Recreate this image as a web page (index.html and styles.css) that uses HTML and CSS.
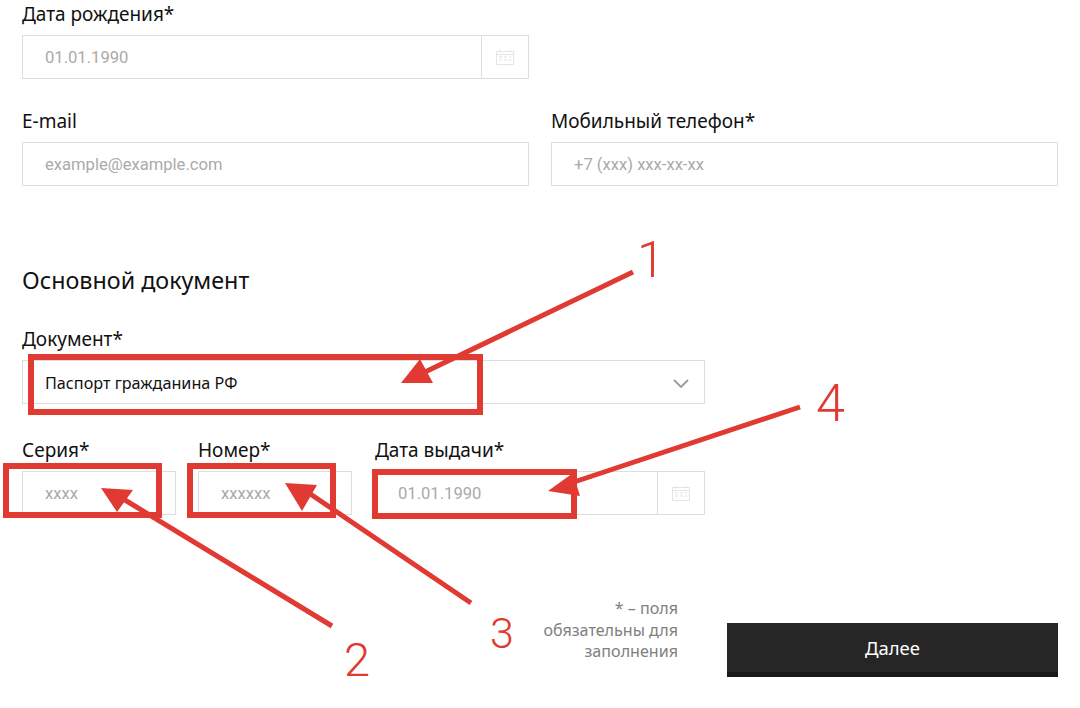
FILE: index.html
```html
<!DOCTYPE html>
<html lang="ru">
<head>
<meta charset="utf-8">
<title>Основной документ</title>
<link rel="stylesheet" href="styles.css">
</head>
<body>
<main class="page">
  <section class="row row-birth">
    <div class="field">
      <div class="label">Дата рождения*</div>
      <div class="control">
        <span class="value placeholder">01.01.1990</span>
        <span class="addon"><svg class="cal" viewBox="0 0 18 16" width="18" height="16"><path d="M.5 2.5h17v13H.5zM.5 5.5h17M4 .5v3M14 .5v3" fill="none" stroke="#e4e4e4"/><path d="M3 8h3M8 8h3M13 8h2M3 11h3M8 11h3M13 11h2" stroke="#e0e0e0" stroke-width="1.2"/></svg></span>
      </div>
    </div>
  </section>
  <section class="row row-two">
    <div class="field">
      <div class="label">E-mail</div>
      <div class="control"><span class="value placeholder">example@example.com</span></div>
    </div>
    <div class="field">
      <div class="label">Мобильный телефон*</div>
      <div class="control"><span class="value placeholder">+7 (xxx) xxx-xx-xx</span></div>
    </div>
  </section>
  <h2 class="heading">Основной документ</h2>
  <section class="doc">
    <div class="field">
      <div class="label">Документ*</div>
      <div class="control select">
        <span class="value">Паспорт гражданина РФ</span>
        <svg class="chev" viewBox="0 0 16 9" width="16" height="9"><path d="M1 1l7 7 7-7" fill="none" stroke="#9a9a9a" stroke-width="1.8"/></svg>
      </div>
    </div>
    <div class="row-three">
      <div class="field">
        <div class="label">Серия*</div>
        <div class="control"><span class="value placeholder">xxxx</span></div>
      </div>
      <div class="field">
        <div class="label">Номер*</div>
        <div class="control"><span class="value placeholder">xxxxxx</span></div>
      </div>
      <div class="field">
        <div class="label">Дата выдачи*</div>
        <div class="control">
          <span class="value placeholder">01.01.1990</span>
          <span class="addon"><svg class="cal" viewBox="0 0 18 16" width="18" height="16"><path d="M.5 2.5h17v13H.5zM.5 5.5h17M4 .5v3M14 .5v3" fill="none" stroke="#e4e4e4"/><path d="M3 8h3M8 8h3M13 8h2M3 11h3M8 11h3M13 11h2" stroke="#e0e0e0" stroke-width="1.2"/></svg></span>
        </div>
      </div>
    </div>
  </section>
  <footer class="actions">
    <p class="note">* – поля<br>обязательны для<br>заполнения</p>
    <button class="next" type="button">Далее</button>
  </footer>
</main>
<svg class="marks" viewBox="0 0 1080 708" width="1080" height="708" aria-hidden="true">
  <g fill="none" stroke="#e03a33" stroke-width="6">
    <rect x="31" y="357" width="449" height="55"/>
    <rect x="6" y="466" width="153" height="49"/>
    <rect x="190" y="466" width="143" height="49"/>
    <rect x="375" y="472" width="199" height="44"/>
    <path d="M633 272L425 372M332 626L120 497M471 603L303 489M800 407L565 485" stroke-width="5"/>
  </g>
  <g fill="#e03a33">
    <path d="M420 359L401 383L433 383Z"/>
    <path d="M101 488L133 490L117 512Z"/>
    <path d="M285 483L317 485L302 511Z"/>
    <path d="M548 491L573 473L580 496Z"/>
  </g>
  <g class="num">
    <text class="n1" x="637" y="277">1</text>
    <text class="n2" x="344" y="676">2</text>
    <text class="n3" x="490" y="648">3</text>
    <text class="n4" x="816" y="421">4</text>
  </g>
</svg>
</body>
</html>
```
FILE: styles.css
```css
html, body { margin: 0; padding: 0; background: #fff; }
body { width: 1080px; height: 708px; overflow: hidden; position: relative; font-family: "Noto Sans", "Open Sans", sans-serif; color: #111; }
.page { padding: 0 22px; box-sizing: border-box; width: 1080px; }
.label { font-size: 19px; line-height: 24px; height: 24px; margin-bottom: 9px; color: #111; }
.control { display: flex; align-items: stretch; height: 44px; border: 1px solid #dedede; box-sizing: border-box; background: #fff; }
.value { flex: 1; display: flex; align-items: center; padding-left: 22px; font-family: Roboto, sans-serif; font-size: 16.6px; color: #111; }
.placeholder { color: #aaa; }
.addon { width: 46px; flex: none; display: flex; align-items: center; justify-content: center; border-left: 1px solid #dedede; }
.row-birth { width: 507px; padding-top: 2px; }
.row-two { display: grid; grid-template-columns: 507px 507px; column-gap: 22px; margin-top: 30px; }
.heading { font-weight: 400; font-size: 23.3px; line-height: 30px; margin: 79px 0 0; color: #111; }
.doc { width: 683px; margin-top: 32px; }
.select { align-items: center; padding-right: 15px; }
.select .value { font-size: 16.2px; font-family: "Noto Sans", sans-serif; align-self: stretch; padding-top: 1px; }
.chev { margin-top: 2px; }
.row-three { display: grid; grid-template-columns: 154px 154px 331px; column-gap: 22px; margin-top: 34px; }
.row-three .field:nth-child(3) { margin-left: 1px; }
.actions { display: flex; justify-content: flex-end; align-items: flex-start; width: 1036px; margin-top: 83px; }
.note { margin: 0 49px 0 0; width: 150px; text-align: right; font-size: 16.1px; line-height: 21.5px; color: #808080; }
.next { width: 331px; height: 54px; margin-top: 25px; border: 0; border-bottom: 5px solid #1a1a1a; background: #262626; color: #fff; font-family: "Noto Sans", sans-serif; font-size: 18.5px; padding: 0; }
.marks { position: absolute; left: 0; top: 0; pointer-events: none; }
.num text { font-family: Roboto, "Liberation Sans", sans-serif; font-weight: 300; fill: #e03a33; }
.n1 { font-size: 50px; }
.n2 { font-size: 47px; }
.n3 { font-size: 43px; }
.n4 { font-size: 52px; }
```
